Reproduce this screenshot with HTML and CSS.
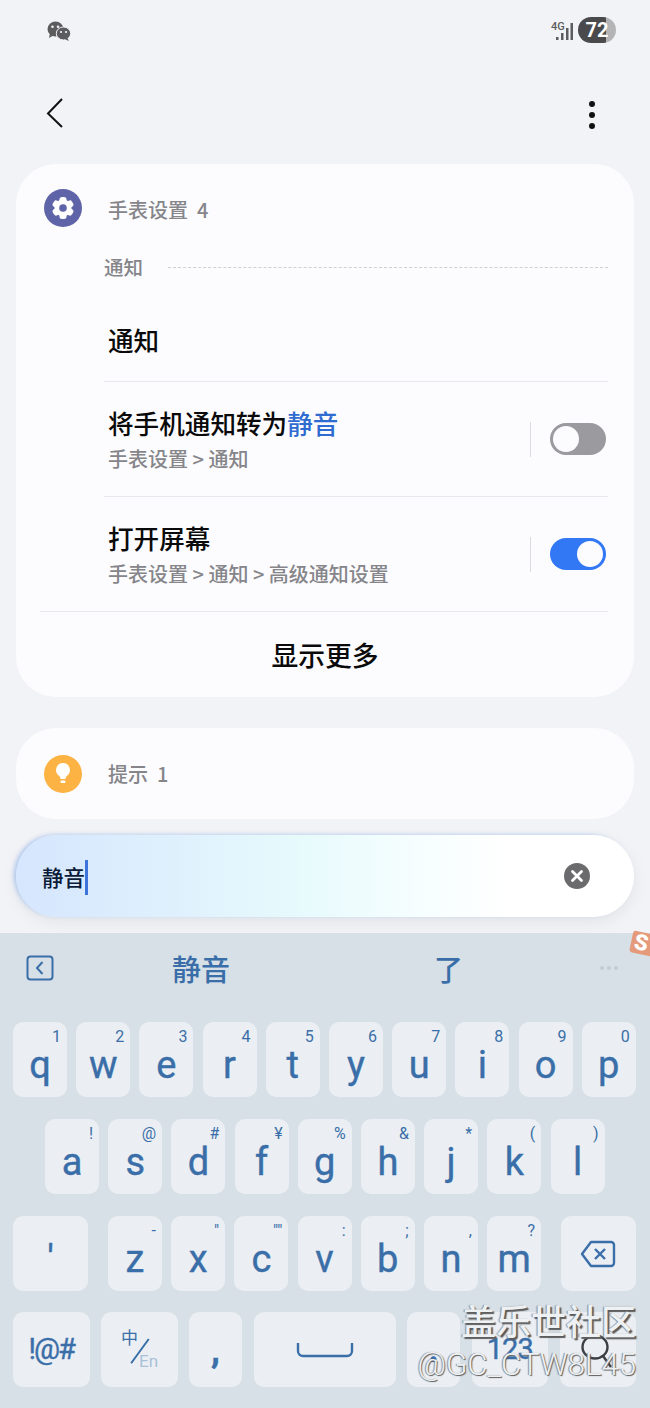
FILE: index.html
```html
<!DOCTYPE html>
<html lang="zh-CN">
<head>
    <meta charset="UTF-8">
    <meta name="viewport" content="width=device-width, initial-scale=1.0">
    <title>手表设置搜索</title>
    <link rel="stylesheet" href="styles.css">
</head>
<body>
    <div class="phone">
        <div class="status-bar">
            <svg class="wechat" viewBox="0 0 24 20" width="24" height="20">
                <ellipse cx="8.500" cy="8" rx="8" ry="7.500" fill="#5c5c5e"/>
                <path d="M3 12l-1 5 5-3z" fill="#5c5c5e"/>
                <ellipse cx="16.500" cy="12.500" rx="7.200" ry="6.500" fill="#5c5c5e" stroke="#f2f3f6" stroke-width="1"/>
                <path d="M20 16.500l2 3.500-4.500-2z" fill="#5c5c5e"/>
                <circle cx="5.500" cy="5.800" r="1.300" fill="#f2f3f6"/>
                <circle cx="11" cy="5.800" r="1.300" fill="#f2f3f6"/>
                <circle cx="14" cy="11" r="1.100" fill="#f2f3f6"/>
                <circle cx="19" cy="11" r="1.100" fill="#f2f3f6"/>
            </svg>
            <div class="status-right">
                <div class="signal">
                    <span class="net">4G</span>
                    <svg viewBox="0 0 17 17" width="17" height="17">
                        <rect x="0" y="14" width="2.500" height="3" fill="#5c5c5e"/>
                        <rect x="5" y="10" width="2.500" height="7" fill="#5c5c5e"/>
                        <rect x="10" y="5" width="2.500" height="12" fill="#5c5c5e"/>
                        <rect x="14.500" y="0" width="2.500" height="17" fill="#5c5c5e"/>
                    </svg>
                </div>
                <div class="battery">72</div>
            </div>
        </div>

        <div class="top-bar">
            <svg viewBox="0 0 18 32" width="18" height="32">
                <path d="M16 2L2 16.500 16 30" fill="none" stroke="#111" stroke-width="2"/>
            </svg>
            <div class="more-dots"><i></i><i></i><i></i></div>
        </div>

        <section class="card results">
            <div class="card-head">
                <svg class="round-icon" viewBox="0 0 38 38" width="38" height="38">
                    <circle cx="19" cy="19" r="19" fill="#5f64a8"/>
                    <g fill="#fff">
                        <circle cx="19" cy="19" r="8.500"/>
                        <rect x="15.500" y="8" width="7" height="22" rx="2.500"/>
                        <rect x="15.500" y="8" width="7" height="22" rx="2.500" transform="rotate(60 19 19)"/>
                        <rect x="15.500" y="8" width="7" height="22" rx="2.500" transform="rotate(120 19 19)"/>
                    </g>
                    <circle cx="19" cy="19" r="3.800" fill="#5f64a8"/>
                </svg>
                <span class="head-text">手表设置&nbsp; 4</span>
            </div>
            <div class="section-label">
                <span>通知</span>
                <div class="dash"></div>
            </div>
            <div class="row row-plain">
                <div class="row-title">通知</div>
            </div>
            <div class="row">
                <div class="row-body">
                    <div class="row-title">将手机通知转为<em>静音</em></div>
                    <div class="row-path">手表设置 &gt; 通知</div>
                </div>
                <div class="switch-wrap"><div class="switch"></div></div>
            </div>
            <div class="row row-last">
                <div class="row-body">
                    <div class="row-title">打开屏幕</div>
                    <div class="row-path">手表设置 &gt; 通知 &gt; 高级通知设置</div>
                </div>
                <div class="switch-wrap"><div class="switch on"></div></div>
            </div>
            <div class="show-more">显示更多</div>
        </section>

        <section class="card tips">
            <svg class="round-icon" viewBox="0 0 38 38" width="38" height="38">
                <circle cx="19" cy="19" r="19" fill="#fdb244"/>
                <path d="M19 8a7 7 0 0 0-4 12.700c.8.600 1.400 1.800 1.500 3.300h5c.1-1.500.7-2.700 1.500-3.300A7 7 0 0 0 19 8z" fill="#fff"/>
                <rect x="16.500" y="25.500" width="5" height="2.500" rx="1" fill="#fff"/>
            </svg>
            <span class="head-text">提示&nbsp; 1</span>
        </section>

        <div class="search">
            <span class="search-text">静音</span><span class="caret"></span>
            <svg class="clear" viewBox="0 0 26 26" width="26" height="26">
                <circle cx="13" cy="13" r="13" fill="#6b6b6d"/>
                <path d="M8.500 8.500l9 9M17.500 8.500l-9 9" stroke="#fff" stroke-width="2.800" stroke-linecap="round"/>
            </svg>
        </div>

        <div class="keyboard">
            <div class="candidates">
                <svg viewBox="0 0 28 26" width="28" height="26">
                    <rect x="1.500" y="1.500" width="25" height="23" rx="3" fill="none" stroke="#3a6ea8" stroke-width="2"/>
                    <path d="M16.500 7l-5.500 6 5.500 6" fill="none" stroke="#3a6ea8" stroke-width="2"/>
                </svg>
                <span class="cand first">静音</span>
                <span class="cand second">了</span>
                <span class="cand-more"><i></i><i></i><i></i></span>
            </div>

            <div class="key-row">
                <div class="key"><sup>1</sup>q</div>
                <div class="key"><sup>2</sup>w</div>
                <div class="key"><sup>3</sup>e</div>
                <div class="key"><sup>4</sup>r</div>
                <div class="key"><sup>5</sup>t</div>
                <div class="key"><sup>6</sup>y</div>
                <div class="key"><sup>7</sup>u</div>
                <div class="key"><sup>8</sup>i</div>
                <div class="key"><sup>9</sup>o</div>
                <div class="key"><sup>0</sup>p</div>
            </div>
            <div class="key-row row-inset">
                <div class="key"><sup>!</sup>a</div>
                <div class="key"><sup>@</sup>s</div>
                <div class="key"><sup>#</sup>d</div>
                <div class="key"><sup>¥</sup>f</div>
                <div class="key"><sup>%</sup>g</div>
                <div class="key"><sup>&amp;</sup>h</div>
                <div class="key"><sup>*</sup>j</div>
                <div class="key"><sup>(</sup>k</div>
                <div class="key"><sup>)</sup>l</div>
            </div>
            <div class="key-row row-third">
                <div class="key key-wide">'</div>
                <div class="key key-after-wide"><sup>-</sup>z</div>
                <div class="key"><sup>"</sup>x</div>
                <div class="key"><sup>""</sup>c</div>
                <div class="key"><sup>:</sup>v</div>
                <div class="key"><sup>;</sup>b</div>
                <div class="key"><sup>,</sup>n</div>
                <div class="key"><sup>?</sup>m</div>
                <div class="key key-wide key-back">
                    <svg viewBox="0 0 36 28" width="36" height="28">
                        <path d="M11 2h20a3 3 0 0 1 3 3v18a3 3 0 0 1-3 3H11L2 14z" fill="none" stroke="#3a6ea8" stroke-width="2.400" stroke-linejoin="round"/>
                        <path d="M15 9l10 10M25 9L15 19" stroke="#3a6ea8" stroke-width="2.400"/>
                    </svg>
                </div>
            </div>
            <div class="key-row row-bottom">
                <div class="key fn symbols">!@#</div>
                <div class="key fn lang"><span class="zh">中</span><span class="slash"></span><span class="en">En</span></div>
                <div class="key punct">,</div>
                <div class="key space">
                    <svg viewBox="0 0 58 18" width="58" height="18">
                        <path d="M2 2v8a5 5 0 0 0 5 5h44a5 5 0 0 0 5-5V2" fill="none" stroke="#3a6ea8" stroke-width="2.400"/>
                    </svg>
                </div>
                <div class="key punct">.</div>
                <div class="key fn num">123</div>
                <div class="key fn go">
                    <svg viewBox="0 0 34 40" width="34" height="40">
                        <ellipse cx="15" cy="14" rx="12.500" ry="11.500" fill="none" stroke="#3b3f44" stroke-width="2.400"/>
                        <path d="M23 23l8 11" stroke="#3b3f44" stroke-width="2.400"/>
                    </svg>
                </div>
            </div>
        </div>

        <div class="sogou">S</div>

        <div class="watermark">
            <div class="wm-name">盖乐世社区</div>
            <div class="wm-user">@GC_CTW8L45</div>
        </div>
    </div>
</body>
</html>
```

FILE: styles.css
```css
* {
    margin: 0;
    padding: 0;
    box-sizing: border-box;
}

body {
    font-family: "Noto Sans CJK SC", "Noto Sans", sans-serif;
    background-color: #f2f3f6;
}

.phone {
    position: relative;
    width: 650px;
    height: 1408px;
    overflow: hidden;
    display: flex;
    flex-direction: column;
}

/* status bar */
.status-bar {
    height: 60px;
    padding: 17px 34px 0 47px;
    display: flex;
    justify-content: space-between;
    align-items: flex-start;
}

.wechat {
    margin-top: 4px;
}

.status-right {
    display: flex;
    align-items: flex-start;
    gap: 5px;
}

.signal {
    position: relative;
    width: 22px;
    height: 23px;
    display: flex;
    justify-content: flex-end;
    align-items: flex-end;
}

.net {
    position: absolute;
    left: 0;
    top: 5px;
    font-family: "Roboto", sans-serif;
    font-size: 11px;
    line-height: 10px;
    font-weight: 500;
    color: #5c5c5e;
}

.battery {
    width: 38px;
    height: 26px;
    border-radius: 13px;
    background: linear-gradient(90deg, #4a4a4c 0, #4a4a4c 74%, #b4b4b6 74%);
    color: #fff;
    font-family: "Roboto", sans-serif;
    font-size: 20px;
    font-weight: 700;
    line-height: 26px;
    text-align: center;
}

/* back and menu */
.top-bar {
    height: 104px;
    padding: 37px 55px 0 46px;
    display: flex;
    justify-content: space-between;
    align-items: flex-start;
}

.more-dots {
    margin-top: 4px;
    display: flex;
    flex-direction: column;
    gap: 5px;
}

.more-dots i {
    display: block;
    width: 6px;
    height: 6px;
    border-radius: 50%;
    background-color: #111;
}

/* cards */
.card {
    margin: 0 16px;
    background-color: #fcfcfe;
    border-radius: 40px;
}

.results {
    height: 533px;
    padding-top: 25px;
}

.card-head {
    height: 38px;
    padding-left: 28px;
    display: flex;
    align-items: center;
    gap: 26px;
}

.card-head .head-text {
    padding-top: 4px;
}

.head-text {
    font-size: 20px;
    line-height: 38px;
    color: #85858a;
    font-weight: 500;
}

.section-label {
    height: 34px;
    margin: 29px 26px 0 88px;
    display: flex;
    align-items: flex-start;
    gap: 25px;
    font-size: 19.500px;
    line-height: 22px;
    color: #85858a;
    font-weight: 500;
}

.dash {
    flex: 1;
    margin-top: 11px;
    border-top: 1px dashed #cfcfd4;
}

.row {
    height: 115px;
    margin: 0 26px 0 88px;
    padding: 0 2px 0 4px;
    display: flex;
    align-items: center;
    justify-content: space-between;
    border-bottom: 1px solid #e8e8ec;
}

.row-plain {
    height: 92px;
    padding-top: 8px;
}

.row-last {
    margin-left: 24px;
    padding-left: 68px;
}

.row-title {
    font-size: 25.600px;
    line-height: 34px;
    font-weight: 500;
    color: #0a0a0a;
}

.row-title em {
    font-style: normal;
    color: #2f6bd0;
}

.row-path {
    margin-top: 5px;
    font-size: 20px;
    line-height: 28px;
    color: #85858a;
    font-weight: 500;
}

.switch-wrap {
    height: 35px;
    padding-left: 19px;
    border-left: 1px solid #dcdce0;
    display: flex;
    align-items: center;
}

.switch {
    position: relative;
    width: 56px;
    height: 32px;
    border-radius: 16px;
    background-color: #9b9b9f;
}

.switch::after {
    content: "";
    position: absolute;
    left: 3px;
    top: 3px;
    width: 26px;
    height: 26px;
    border-radius: 50%;
    background-color: #fcfcfe;
}

.switch.on {
    background-color: #3278f5;
}

.switch.on::after {
    left: 27px;
}

.show-more {
    height: 84px;
    font-size: 26.800px;
    line-height: 86px;
    font-weight: 500;
    text-align: center;
    color: #0a0a0a;
}

.tips {
    height: 91px;
    margin-top: 31px;
    padding-left: 28px;
    display: flex;
    align-items: center;
    gap: 26px;
}

/* search field */
.search {
    height: 82px;
    margin: 16px 16px 0;
    padding: 0 44px 0 26px;
    border-radius: 41px;
    background: linear-gradient(90deg, #d5e6fe 0, #dff0fd 25%, #e6fafc 45%, #f6feff 65%, #fff 80%);
    box-shadow: -3px -1px 4px -1px rgba(130, 170, 235, .6), 0 5px 14px rgba(150, 160, 175, .18);
    display: flex;
    align-items: center;
}

.search-text {
    font-size: 21.500px;
    font-weight: 500;
    color: #0c1c38;
}

.caret {
    width: 3px;
    height: 35px;
    background-color: #3d74dc;
    margin-top: 2px;
}

.clear {
    margin-left: auto;
}

/* keyboard */
.keyboard {
    flex: 1;
    margin-top: 16px;
    background-color: #d7e0e6;
    padding-left: 13px;
    font-family: "Roboto", sans-serif;
    color: #3a6ea8;
}

.candidates {
    height: 70px;
    padding-left: 13px;
    display: flex;
    align-items: center;
}

.cand {
    font-family: "Noto Sans CJK SC", sans-serif;
    font-size: 29px;
    font-weight: 500;
}

.first {
    margin-left: 118px;
}

.second {
    margin-left: 204px;
}

.cand-more {
    margin-left: 137px;
    display: flex;
    gap: 3px;
}

.cand-more i {
    width: 4px;
    height: 4px;
    border-radius: 50%;
    background-color: #c3ccd3;
}

.key-row {
    display: flex;
    gap: 9.200px;
    height: 75px;
    margin-top: 19px;
}

.row-inset {
    margin-top: 22px;
    padding-left: 32px;
}

.row-third {
    margin-top: 22px;
}

.row-bottom {
    margin-top: 21px;
    gap: 11.500px;
}

.key {
    position: relative;
    width: 54px;
    height: 75px;
    padding-top: 11px;
    border-radius: 10px;
    background-color: #ebeff3;
    display: flex;
    align-items: center;
    justify-content: center;
    font-size: 38px;
    font-weight: 400;
    -webkit-text-stroke: .4px #3a6ea8;
    line-height: 1;
}

.key sup {
    position: absolute;
    right: 6px;
    top: 5px;
    font-size: 16px;
    font-weight: 400;
    -webkit-text-stroke: 0;
    line-height: 20px;
}

.key-wide {
    width: 75px;
}

.key-after-wide {
    margin-left: 10.800px;
}

.key-back {
    margin-left: 10.500px;
    padding-top: 0;
}

.fn {
    width: 76.500px;
    padding-top: 0;
}

.symbols {
    font-size: 29px;
    letter-spacing: -2px;
}

.num {
    font-size: 29px;
    letter-spacing: -1px;
}

.go {
    padding-top: 6px;
    padding-right: 2px;
}

.punct {
    width: 53px;
    padding-top: 0;
    font-size: 36px;
    font-weight: 700;
}

.space {
    width: 142px;
    padding-top: 0;
}

.lang .zh {
    position: absolute;
    left: 20px;
    top: 16px;
    font-family: "Noto Sans CJK SC", sans-serif;
    font-size: 17px;
    -webkit-text-stroke: 0;
}

.lang .slash {
    position: absolute;
    left: 38px;
    top: 24px;
    width: 1.500px;
    height: 30px;
    background-color: #3a6ea8;
    transform: rotate(36deg);
}

.lang .en {
    position: absolute;
    left: 38px;
    top: 41px;
    font-size: 17px;
    -webkit-text-stroke: 0;
    color: #a9c0d8;
}

.sogou {
    position: absolute;
    left: 631px;
    top: 933px;
    width: 28px;
    height: 22px;
    border-radius: 3px;
    background-color: #e59a7c;
    color: #fff;
    font-family: "Roboto", sans-serif;
    font-size: 22px;
    font-weight: 900;
    line-height: 22px;
    padding-right: 8px;
    text-align: center;
    transform: rotate(12deg);
}

/* forum watermark over the keyboard */
.watermark {
    position: absolute;
    right: 14px;
    top: 1297px;
    text-align: right;
    color: #eef1f3;
    text-shadow: 2px 2px 1px #5c5c5c, -1px 0 1px #8a8a8a;
}

.wm-name {
    font-size: 35px;
    line-height: 46px;
    font-weight: 500;
}

.wm-user {
    font-family: "Roboto", sans-serif;
    font-size: 31.200px;
    font-weight: 300;
    line-height: 44px;
    text-shadow: 1px 1px 1px #5c5c5c, -1px 0 1px #8a8a8a;
}
```
